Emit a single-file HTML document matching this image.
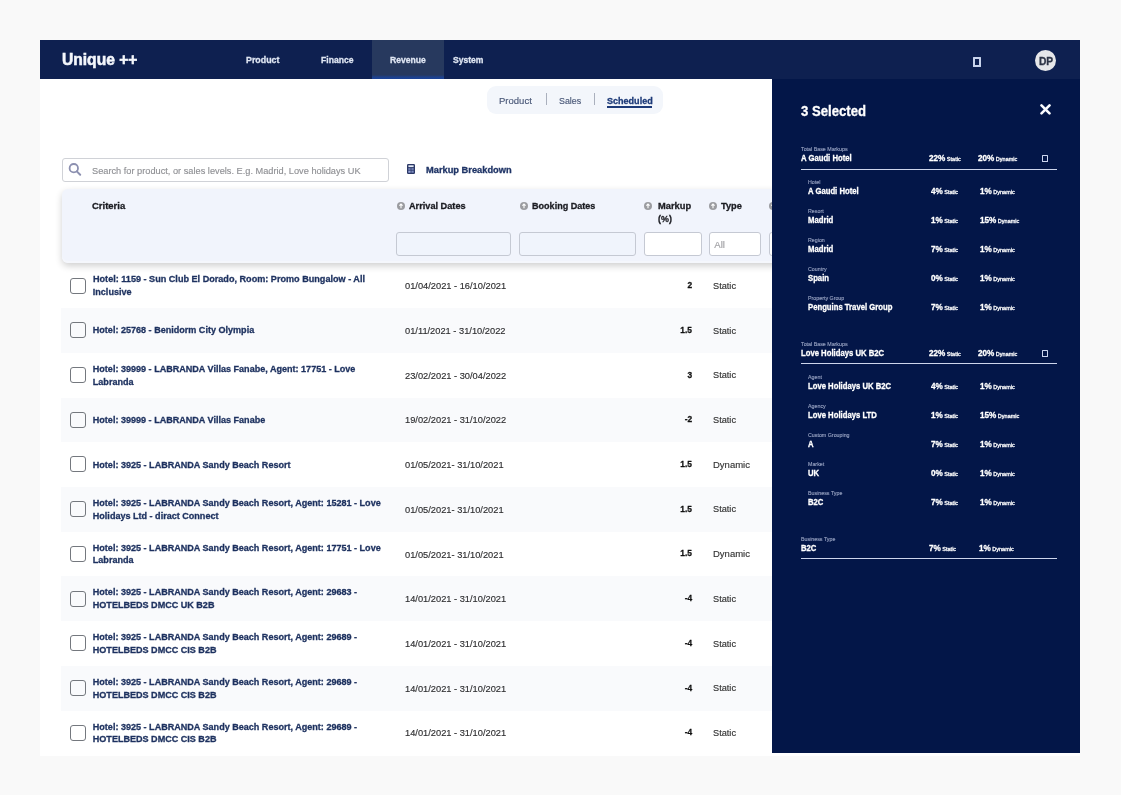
<!DOCTYPE html>
<html><head><meta charset="utf-8"><style>
html,body{margin:0;padding:0;}
body{width:1121px;height:795px;background:#f9f9f9;position:relative;overflow:hidden;font-family:"Liberation Sans", sans-serif;}
.t{position:absolute;white-space:nowrap;}
.b{position:absolute;box-sizing:border-box;}
</style></head><body><div style="position:absolute;left:0;top:0;width:1121px;height:795px;will-change:transform;">
<div class="b" style="left:40px;top:40px;width:1040px;height:715.5px;background:#fff;"></div>
<div class="b" style="left:40px;top:40px;width:1040px;height:39px;background:#0e2050;"></div>
<div class="b" style="left:372px;top:40px;width:72px;height:39px;background:#27395e;"></div>
<div class="b" style="left:372px;top:74.5px;width:72px;height:4.5px;background:linear-gradient(to bottom, rgba(27,66,150,0) 0%, rgba(27,66,150,0.85) 55%, #1b4296 100%);"></div>
<div class="t" style="left:62.10px;top:51.72px;font-size:15.6px;line-height:15.6px;font-weight:700;color:#f4f7fc;-webkit-text-stroke:0.3px #f4f7fc;transform:scaleX(1.0001);transform-origin:left center;-webkit-text-stroke:0.55px #f4f7fc;">Unique ++</div>
<div class="t" style="left:245.70px;top:55.02px;font-size:9.6px;line-height:9.6px;font-weight:700;color:#dfe6f3;-webkit-text-stroke:0.3px #dfe6f3;transform:scaleX(0.9214);transform-origin:left center;">Product</div>
<div class="t" style="left:320.80px;top:55.02px;font-size:9.6px;line-height:9.6px;font-weight:700;color:#dfe6f3;-webkit-text-stroke:0.3px #dfe6f3;transform:scaleX(0.8962);transform-origin:left center;">Finance</div>
<div class="t" style="left:390.20px;top:55.02px;font-size:9.6px;line-height:9.6px;font-weight:700;color:#dfe6f3;-webkit-text-stroke:0.3px #dfe6f3;transform:scaleX(0.8950);transform-origin:left center;">Revenue</div>
<div class="t" style="left:452.80px;top:55.02px;font-size:9.6px;line-height:9.6px;font-weight:700;color:#dfe6f3;-webkit-text-stroke:0.3px #dfe6f3;transform:scaleX(0.8934);transform-origin:left center;">System</div>
<div class="b" style="left:973px;top:57.3px;width:8.1px;height:9.6px;border:2px solid #c9d4ec;border-radius:0.5px;"></div>
<div class="b" style="left:1035px;top:50.2px;width:21.2px;height:21.2px;border-radius:50%;background:#e6e7ea;"></div>
<div class="t" style="left:1038.60px;top:57.00px;font-size:10.0px;line-height:10.0px;font-weight:700;color:#2d3446;-webkit-text-stroke:0.3px #2d3446;transform:scaleX(1.0211);transform-origin:left center;">DP</div>
<div class="b" style="left:487px;top:86px;width:176px;height:28px;background:#f3f6fb;border-radius:9px;"></div>
<div class="t" style="left:499.00px;top:95.88px;font-size:9.4px;line-height:9.4px;font-weight:400;color:#4a5878;-webkit-text-stroke:0.15px #4a5878;transform:scaleX(1.0151);transform-origin:left center;">Product</div>
<div class="b" style="left:545.8px;top:93.3px;width:1px;height:12.2px;background:#aab0bd;"></div>
<div class="t" style="left:558.70px;top:95.88px;font-size:9.4px;line-height:9.4px;font-weight:400;color:#4a5878;-webkit-text-stroke:0.15px #4a5878;transform:scaleX(0.9466);transform-origin:left center;">Sales</div>
<div class="b" style="left:593.6px;top:93.3px;width:1px;height:12.2px;background:#aab0bd;"></div>
<div class="t" style="left:606.80px;top:95.88px;font-size:9.4px;line-height:9.4px;font-weight:700;color:#1d3a78;-webkit-text-stroke:0.3px #1d3a78;transform:scaleX(0.9640);transform-origin:left center;">Scheduled</div>
<div class="b" style="left:606.8px;top:106.4px;width:45.7px;height:1.3px;background:#1d3a78;"></div>
<div class="b" style="left:62px;top:158px;width:327px;height:24px;border:1px solid #d0d2d7;border-radius:3px;background:#fff;"></div>
<svg class="b" style="left:66px;top:161px" width="18" height="18" viewBox="0 0 18 18"><circle cx="7.8" cy="7.2" r="4.2" fill="none" stroke="#8c90b0" stroke-width="1.8"/><line x1="10.8" y1="10.4" x2="14.2" y2="13.8" stroke="#8c90b0" stroke-width="2" stroke-linecap="round"/></svg>
<div class="t" style="left:92.10px;top:165.68px;font-size:9.9px;line-height:9.9px;font-weight:400;color:#8f9094;-webkit-text-stroke:0.15px #8f9094;transform:scaleX(0.9339);transform-origin:left center;">Search for product, or sales levels. E.g. Madrid, Love holidays UK</div>
<svg class="b" style="left:407px;top:163.8px" width="8" height="10" viewBox="0 0 8 10"><rect x="0" y="0" width="8" height="10" rx="1.2" fill="#2b3866"/><rect x="1.4" y="1.3" width="5.2" height="1.8" fill="#e3eaf7"/><rect x="1.3" y="4.2" width="2.3" height="1.6" fill="#7d8cc0"/><rect x="4.4" y="4.2" width="2.3" height="1.6" fill="#7d8cc0"/><rect x="1.3" y="6.6" width="2.3" height="2.1" fill="#9aa8dd"/><rect x="4.4" y="6.6" width="2.3" height="2.1" fill="#7d8cc0"/></svg>
<div class="t" style="left:425.70px;top:165.86px;font-size:9.3px;line-height:9.3px;font-weight:700;color:#1f3466;-webkit-text-stroke:0.3px #1f3466;transform:scaleX(0.9992);transform-origin:left center;">Markup Breakdown</div>
<div class="b" style="left:61.5px;top:189.3px;width:720px;height:73.5px;background:#f1f4fc;border-radius:6px;box-shadow:0 3px 7px rgba(0,0,0,0.19), inset 0 -2px 0 #f5f7fc;"></div>
<div class="t" style="left:92.00px;top:201.94px;font-size:9.2px;line-height:9.2px;font-weight:700;color:#1b1c22;-webkit-text-stroke:0.3px #1b1c22;transform:scaleX(1.0320);transform-origin:left center;">Criteria</div>
<svg class="b" style="left:396.7px;top:201.9px" width="8" height="8" viewBox="0 0 8 8"><circle cx="4" cy="4" r="4" fill="#9b9ca0"/><path d="M4 6.2V2.2M2.4 3.7L4 2 5.6 3.7" fill="none" stroke="#fff" stroke-width="1.1"/></svg>
<div class="t" style="left:408.60px;top:201.94px;font-size:9.2px;line-height:9.2px;font-weight:700;color:#1b1c22;-webkit-text-stroke:0.3px #1b1c22;transform:scaleX(0.9985);transform-origin:left center;">Arrival Dates</div>
<svg class="b" style="left:519.5px;top:201.9px" width="8" height="8" viewBox="0 0 8 8"><circle cx="4" cy="4" r="4" fill="#9b9ca0"/><path d="M4 6.2V2.2M2.4 3.7L4 2 5.6 3.7" fill="none" stroke="#fff" stroke-width="1.1"/></svg>
<div class="t" style="left:531.70px;top:201.94px;font-size:9.2px;line-height:9.2px;font-weight:700;color:#1b1c22;-webkit-text-stroke:0.3px #1b1c22;transform:scaleX(0.9856);transform-origin:left center;">Booking Dates</div>
<svg class="b" style="left:644.3px;top:201.9px" width="8" height="8" viewBox="0 0 8 8"><circle cx="4" cy="4" r="4" fill="#9b9ca0"/><path d="M4 6.2V2.2M2.4 3.7L4 2 5.6 3.7" fill="none" stroke="#fff" stroke-width="1.1"/></svg>
<div class="t" style="left:657.90px;top:201.94px;font-size:9.2px;line-height:9.2px;font-weight:700;color:#1b1c22;-webkit-text-stroke:0.3px #1b1c22;transform:scaleX(1.0126);transform-origin:left center;">Markup</div>
<div class="t" style="left:657.90px;top:214.94px;font-size:9.2px;line-height:9.2px;font-weight:700;color:#1b1c22;-webkit-text-stroke:0.3px #1b1c22;transform:scaleX(0.9700);transform-origin:left center;">(%)</div>
<svg class="b" style="left:709.2px;top:201.9px" width="8" height="8" viewBox="0 0 8 8"><circle cx="4" cy="4" r="4" fill="#9b9ca0"/><path d="M4 6.2V2.2M2.4 3.7L4 2 5.6 3.7" fill="none" stroke="#fff" stroke-width="1.1"/></svg>
<div class="t" style="left:721.00px;top:201.94px;font-size:9.2px;line-height:9.2px;font-weight:700;color:#1b1c22;-webkit-text-stroke:0.3px #1b1c22;transform:scaleX(1.0065);transform-origin:left center;">Type</div>
<svg class="b" style="left:768.5px;top:201.9px" width="8" height="8" viewBox="0 0 8 8"><circle cx="4" cy="4" r="4" fill="#9b9ca0"/><path d="M4 6.2V2.2M2.4 3.7L4 2 5.6 3.7" fill="none" stroke="#fff" stroke-width="1.1"/></svg>
<div class="b" style="left:396.4px;top:232.2px;width:115px;height:23.4px;border:1px solid #c5c9d3;border-radius:3px;background:#f0f4fc;"></div>
<div class="b" style="left:519.3px;top:232.2px;width:117px;height:23.4px;border:1px solid #c5c9d3;border-radius:3px;background:#f0f4fc;"></div>
<div class="b" style="left:644.3px;top:232.2px;width:57.4px;height:23.4px;border:1px solid #c5c9d3;border-radius:3px;background:#fff;"></div>
<div class="b" style="left:709.2px;top:232.2px;width:52.3px;height:23.4px;border:1px solid #c5c9d3;border-radius:3px;background:#fff;"></div>
<div class="b" style="left:768.6px;top:232.2px;width:20px;height:23.4px;border:1px solid #c5c9d3;border-radius:3px;background:#fff;"></div>
<div class="t" style="left:714.30px;top:240.12px;font-size:9.6px;line-height:9.6px;font-weight:400;color:#a0a0a4;-webkit-text-stroke:0.15px #a0a0a4;">All</div>
<div class="b" style="left:69.8px;top:277.65500000000003px;width:16px;height:16px;border:1.4px solid #74787e;border-radius:3px;"></div>
<div class="t" style="left:92.80px;top:275.42px;font-size:9.05px;line-height:9.05px;font-weight:700;color:#1d315f;-webkit-text-stroke:0.3px #1d315f;transform:scaleX(1.0052);transform-origin:left center;">Hotel: 1159 - Sun Club El Dorado, Room: Promo Bungalow - All</div>
<div class="t" style="left:92.80px;top:288.22px;font-size:9.05px;line-height:9.05px;font-weight:700;color:#1d315f;-webkit-text-stroke:0.3px #1d315f;">Inclusive</div>
<div class="t" style="left:404.80px;top:281.33px;font-size:9.9px;line-height:9.9px;font-weight:400;color:#2e2e30;-webkit-text-stroke:0.15px #2e2e30;transform:scaleX(0.9400);transform-origin:left center;">01/04/2021 - 16/10/2021</div>
<div class="t" style="right:428.80px;text-align:right;top:281.12px;font-size:9.3px;line-height:9.3px;font-weight:700;color:#111;-webkit-text-stroke:0.3px #111;transform:scaleX(0.9000);transform-origin:right center;">2</div>
<div class="t" style="left:713.00px;top:280.94px;font-size:9.9px;line-height:9.9px;font-weight:400;color:#333;-webkit-text-stroke:0.15px #333;transform:scaleX(0.9311);transform-origin:left center;">Static</div>
<div class="b" style="left:61px;top:308.21px;width:711px;height:44.71px;background:#f9fafc;"></div>
<div class="b" style="left:69.8px;top:322.365px;width:16px;height:16px;border:1.4px solid #74787e;border-radius:3px;"></div>
<div class="t" style="left:92.80px;top:326.43px;font-size:9.05px;line-height:9.05px;font-weight:700;color:#1d315f;-webkit-text-stroke:0.3px #1d315f;">Hotel: 25768 - Benidorm City Olympia</div>
<div class="t" style="left:404.80px;top:326.04px;font-size:9.9px;line-height:9.9px;font-weight:400;color:#2e2e30;-webkit-text-stroke:0.15px #2e2e30;transform:scaleX(0.9400);transform-origin:left center;">01/11/2021 - 31/10/2022</div>
<div class="t" style="right:428.80px;text-align:right;top:325.82px;font-size:9.3px;line-height:9.3px;font-weight:700;color:#111;-webkit-text-stroke:0.3px #111;transform:scaleX(0.9000);transform-origin:right center;">1.5</div>
<div class="t" style="left:713.00px;top:325.64px;font-size:9.9px;line-height:9.9px;font-weight:400;color:#333;-webkit-text-stroke:0.15px #333;transform:scaleX(0.9311);transform-origin:left center;">Static</div>
<div class="b" style="left:69.8px;top:367.07500000000005px;width:16px;height:16px;border:1.4px solid #74787e;border-radius:3px;"></div>
<div class="t" style="left:92.80px;top:364.84px;font-size:9.05px;line-height:9.05px;font-weight:700;color:#1d315f;-webkit-text-stroke:0.3px #1d315f;">Hotel: 39999 - LABRANDA Villas Fanabe, Agent: 17751 - Love</div>
<div class="t" style="left:92.80px;top:377.64px;font-size:9.05px;line-height:9.05px;font-weight:700;color:#1d315f;-webkit-text-stroke:0.3px #1d315f;">Labranda</div>
<div class="t" style="left:404.80px;top:370.75px;font-size:9.9px;line-height:9.9px;font-weight:400;color:#2e2e30;-webkit-text-stroke:0.15px #2e2e30;transform:scaleX(0.9400);transform-origin:left center;">23/02/2021 - 30/04/2022</div>
<div class="t" style="right:428.80px;text-align:right;top:370.54px;font-size:9.3px;line-height:9.3px;font-weight:700;color:#111;-webkit-text-stroke:0.3px #111;transform:scaleX(0.9000);transform-origin:right center;">3</div>
<div class="t" style="left:713.00px;top:370.36px;font-size:9.9px;line-height:9.9px;font-weight:400;color:#333;-webkit-text-stroke:0.15px #333;transform:scaleX(0.9311);transform-origin:left center;">Static</div>
<div class="b" style="left:61px;top:397.63px;width:711px;height:44.71px;background:#f9fafc;"></div>
<div class="b" style="left:69.8px;top:411.785px;width:16px;height:16px;border:1.4px solid #74787e;border-radius:3px;"></div>
<div class="t" style="left:92.80px;top:415.85px;font-size:9.05px;line-height:9.05px;font-weight:700;color:#1d315f;-webkit-text-stroke:0.3px #1d315f;">Hotel: 39999 - LABRANDA Villas Fanabe</div>
<div class="t" style="left:404.80px;top:415.46px;font-size:9.9px;line-height:9.9px;font-weight:400;color:#2e2e30;-webkit-text-stroke:0.15px #2e2e30;transform:scaleX(0.9400);transform-origin:left center;">19/02/2021 - 31/10/2022</div>
<div class="t" style="right:428.80px;text-align:right;top:415.25px;font-size:9.3px;line-height:9.3px;font-weight:700;color:#111;-webkit-text-stroke:0.3px #111;transform:scaleX(0.9000);transform-origin:right center;">-2</div>
<div class="t" style="left:713.00px;top:415.06px;font-size:9.9px;line-height:9.9px;font-weight:400;color:#333;-webkit-text-stroke:0.15px #333;transform:scaleX(0.9311);transform-origin:left center;">Static</div>
<div class="b" style="left:69.8px;top:456.49500000000006px;width:16px;height:16px;border:1.4px solid #74787e;border-radius:3px;"></div>
<div class="t" style="left:92.80px;top:460.56px;font-size:9.05px;line-height:9.05px;font-weight:700;color:#1d315f;-webkit-text-stroke:0.3px #1d315f;">Hotel: 3925 - LABRANDA Sandy Beach Resort</div>
<div class="t" style="left:404.80px;top:460.18px;font-size:9.9px;line-height:9.9px;font-weight:400;color:#2e2e30;-webkit-text-stroke:0.15px #2e2e30;transform:scaleX(0.9400);transform-origin:left center;">01/05/2021- 31/10/2021</div>
<div class="t" style="right:428.80px;text-align:right;top:459.96px;font-size:9.3px;line-height:9.3px;font-weight:700;color:#111;-webkit-text-stroke:0.3px #111;transform:scaleX(0.9000);transform-origin:right center;">1.5</div>
<div class="t" style="left:713.00px;top:459.78px;font-size:9.9px;line-height:9.9px;font-weight:400;color:#333;-webkit-text-stroke:0.15px #333;transform:scaleX(0.9630);transform-origin:left center;">Dynamic</div>
<div class="b" style="left:61px;top:487.05px;width:711px;height:44.71px;background:#f9fafc;"></div>
<div class="b" style="left:69.8px;top:501.20500000000004px;width:16px;height:16px;border:1.4px solid #74787e;border-radius:3px;"></div>
<div class="t" style="left:92.80px;top:498.97px;font-size:9.05px;line-height:9.05px;font-weight:700;color:#1d315f;-webkit-text-stroke:0.3px #1d315f;">Hotel: 3925 - LABRANDA Sandy Beach Resort, Agent: 15281 - Love</div>
<div class="t" style="left:92.80px;top:511.76px;font-size:9.05px;line-height:9.05px;font-weight:700;color:#1d315f;-webkit-text-stroke:0.3px #1d315f;">Holidays Ltd - diract Connect</div>
<div class="t" style="left:404.80px;top:504.89px;font-size:9.9px;line-height:9.9px;font-weight:400;color:#2e2e30;-webkit-text-stroke:0.15px #2e2e30;transform:scaleX(0.9400);transform-origin:left center;">01/05/2021- 31/10/2021</div>
<div class="t" style="right:428.80px;text-align:right;top:504.67px;font-size:9.3px;line-height:9.3px;font-weight:700;color:#111;-webkit-text-stroke:0.3px #111;transform:scaleX(0.9000);transform-origin:right center;">1.5</div>
<div class="t" style="left:713.00px;top:504.48px;font-size:9.9px;line-height:9.9px;font-weight:400;color:#333;-webkit-text-stroke:0.15px #333;transform:scaleX(0.9311);transform-origin:left center;">Static</div>
<div class="b" style="left:69.8px;top:545.915px;width:16px;height:16px;border:1.4px solid #74787e;border-radius:3px;"></div>
<div class="t" style="left:92.80px;top:543.67px;font-size:9.05px;line-height:9.05px;font-weight:700;color:#1d315f;-webkit-text-stroke:0.3px #1d315f;">Hotel: 3925 - LABRANDA Sandy Beach Resort, Agent: 17751 - Love</div>
<div class="t" style="left:92.80px;top:556.47px;font-size:9.05px;line-height:9.05px;font-weight:700;color:#1d315f;-webkit-text-stroke:0.3px #1d315f;">Labranda</div>
<div class="t" style="left:404.80px;top:549.60px;font-size:9.9px;line-height:9.9px;font-weight:400;color:#2e2e30;-webkit-text-stroke:0.15px #2e2e30;transform:scaleX(0.9400);transform-origin:left center;">01/05/2021- 31/10/2021</div>
<div class="t" style="right:428.80px;text-align:right;top:549.38px;font-size:9.3px;line-height:9.3px;font-weight:700;color:#111;-webkit-text-stroke:0.3px #111;transform:scaleX(0.9000);transform-origin:right center;">1.5</div>
<div class="t" style="left:713.00px;top:549.20px;font-size:9.9px;line-height:9.9px;font-weight:400;color:#333;-webkit-text-stroke:0.15px #333;transform:scaleX(0.9630);transform-origin:left center;">Dynamic</div>
<div class="b" style="left:61px;top:576.47px;width:711px;height:44.71px;background:#f9fafc;"></div>
<div class="b" style="left:69.8px;top:590.625px;width:16px;height:16px;border:1.4px solid #74787e;border-radius:3px;"></div>
<div class="t" style="left:92.80px;top:588.38px;font-size:9.05px;line-height:9.05px;font-weight:700;color:#1d315f;-webkit-text-stroke:0.3px #1d315f;">Hotel: 3925 - LABRANDA Sandy Beach Resort, Agent: 29683 -</div>
<div class="t" style="left:92.80px;top:601.18px;font-size:9.05px;line-height:9.05px;font-weight:700;color:#1d315f;-webkit-text-stroke:0.3px #1d315f;">HOTELBEDS DMCC UK B2B</div>
<div class="t" style="left:404.80px;top:594.31px;font-size:9.9px;line-height:9.9px;font-weight:400;color:#2e2e30;-webkit-text-stroke:0.15px #2e2e30;transform:scaleX(0.9400);transform-origin:left center;">14/01/2021 - 31/10/2021</div>
<div class="t" style="right:428.80px;text-align:right;top:594.09px;font-size:9.3px;line-height:9.3px;font-weight:700;color:#111;-webkit-text-stroke:0.3px #111;transform:scaleX(0.9000);transform-origin:right center;">-4</div>
<div class="t" style="left:713.00px;top:593.91px;font-size:9.9px;line-height:9.9px;font-weight:400;color:#333;-webkit-text-stroke:0.15px #333;transform:scaleX(0.9311);transform-origin:left center;">Static</div>
<div class="b" style="left:69.8px;top:635.335px;width:16px;height:16px;border:1.4px solid #74787e;border-radius:3px;"></div>
<div class="t" style="left:92.80px;top:633.10px;font-size:9.05px;line-height:9.05px;font-weight:700;color:#1d315f;-webkit-text-stroke:0.3px #1d315f;">Hotel: 3925 - LABRANDA Sandy Beach Resort, Agent: 29689 -</div>
<div class="t" style="left:92.80px;top:645.89px;font-size:9.05px;line-height:9.05px;font-weight:700;color:#1d315f;-webkit-text-stroke:0.3px #1d315f;">HOTELBEDS DMCC CIS B2B</div>
<div class="t" style="left:404.80px;top:639.02px;font-size:9.9px;line-height:9.9px;font-weight:400;color:#2e2e30;-webkit-text-stroke:0.15px #2e2e30;transform:scaleX(0.9400);transform-origin:left center;">14/01/2021 - 31/10/2021</div>
<div class="t" style="right:428.80px;text-align:right;top:638.80px;font-size:9.3px;line-height:9.3px;font-weight:700;color:#111;-webkit-text-stroke:0.3px #111;transform:scaleX(0.9000);transform-origin:right center;">-4</div>
<div class="t" style="left:713.00px;top:638.62px;font-size:9.9px;line-height:9.9px;font-weight:400;color:#333;-webkit-text-stroke:0.15px #333;transform:scaleX(0.9311);transform-origin:left center;">Static</div>
<div class="b" style="left:61px;top:665.89px;width:711px;height:44.71px;background:#f9fafc;"></div>
<div class="b" style="left:69.8px;top:680.045px;width:16px;height:16px;border:1.4px solid #74787e;border-radius:3px;"></div>
<div class="t" style="left:92.80px;top:677.80px;font-size:9.05px;line-height:9.05px;font-weight:700;color:#1d315f;-webkit-text-stroke:0.3px #1d315f;">Hotel: 3925 - LABRANDA Sandy Beach Resort, Agent: 29689 -</div>
<div class="t" style="left:92.80px;top:690.60px;font-size:9.05px;line-height:9.05px;font-weight:700;color:#1d315f;-webkit-text-stroke:0.3px #1d315f;">HOTELBEDS DMCC CIS B2B</div>
<div class="t" style="left:404.80px;top:683.73px;font-size:9.9px;line-height:9.9px;font-weight:400;color:#2e2e30;-webkit-text-stroke:0.15px #2e2e30;transform:scaleX(0.9400);transform-origin:left center;">14/01/2021 - 31/10/2021</div>
<div class="t" style="right:428.80px;text-align:right;top:683.50px;font-size:9.3px;line-height:9.3px;font-weight:700;color:#111;-webkit-text-stroke:0.3px #111;transform:scaleX(0.9000);transform-origin:right center;">-4</div>
<div class="t" style="left:713.00px;top:683.33px;font-size:9.9px;line-height:9.9px;font-weight:400;color:#333;-webkit-text-stroke:0.15px #333;transform:scaleX(0.9311);transform-origin:left center;">Static</div>
<div class="b" style="left:69.8px;top:724.755px;width:16px;height:16px;border:1.4px solid #74787e;border-radius:3px;"></div>
<div class="t" style="left:92.80px;top:722.51px;font-size:9.05px;line-height:9.05px;font-weight:700;color:#1d315f;-webkit-text-stroke:0.3px #1d315f;">Hotel: 3925 - LABRANDA Sandy Beach Resort, Agent: 29689 -</div>
<div class="t" style="left:92.80px;top:735.31px;font-size:9.05px;line-height:9.05px;font-weight:700;color:#1d315f;-webkit-text-stroke:0.3px #1d315f;">HOTELBEDS DMCC CIS B2B</div>
<div class="t" style="left:404.80px;top:728.44px;font-size:9.9px;line-height:9.9px;font-weight:400;color:#2e2e30;-webkit-text-stroke:0.15px #2e2e30;transform:scaleX(0.9400);transform-origin:left center;">14/01/2021 - 31/10/2021</div>
<div class="t" style="right:428.80px;text-align:right;top:728.22px;font-size:9.3px;line-height:9.3px;font-weight:700;color:#111;-webkit-text-stroke:0.3px #111;transform:scaleX(0.9000);transform-origin:right center;">-4</div>
<div class="t" style="left:713.00px;top:728.04px;font-size:9.9px;line-height:9.9px;font-weight:400;color:#333;-webkit-text-stroke:0.15px #333;transform:scaleX(0.9311);transform-origin:left center;">Static</div>
<div class="b" style="left:772px;top:79px;width:308px;height:674px;background:#031648;"></div>
<div class="t" style="left:801.00px;top:103.78px;font-size:14.4px;line-height:14.4px;font-weight:700;color:#ffffff;-webkit-text-stroke:0.3px #ffffff;transform:scaleX(0.9129);transform-origin:left center;">3 Selected</div>
<svg class="b" style="left:1040px;top:104px" width="11" height="11" viewBox="0 0 11 11"><path d="M1.5 1.4L9.5 9.3M9.5 1.4L1.5 9.3" stroke="#fbfcff" stroke-width="2.6" stroke-linecap="round"/></svg>
<div class="t" style="left:801.00px;top:146.88px;font-size:5.9px;line-height:5.9px;font-weight:400;color:#96a1c0;-webkit-text-stroke:0.15px #96a1c0;transform:scaleX(0.9000);transform-origin:left center;">Total Base Markups</div>
<div class="t" style="left:801.00px;top:154.18px;font-size:8.4px;line-height:8.4px;font-weight:700;color:#ffffff;-webkit-text-stroke:0.3px #ffffff;transform:scaleX(0.9200);transform-origin:left center;">A Gaudi Hotel</div>
<div class="t" style="left:928.50px;top:154.02px;font-size:8.6px;line-height:8.6px;font-weight:700;color:#ffffff;-webkit-text-stroke:0.3px #ffffff;transform:scaleX(0.9500);transform-origin:left center;">22%<span style="font-size:5.8px;font-weight:400"> Static</span></div>
<div class="t" style="left:978.00px;top:154.02px;font-size:8.6px;line-height:8.6px;font-weight:700;color:#ffffff;-webkit-text-stroke:0.3px #ffffff;transform:scaleX(0.9500);transform-origin:left center;">20%<span style="font-size:5.8px;font-weight:400"> Dynamic</span></div>
<div class="b" style="left:1042.4px;top:154.8px;width:5.7px;height:7.2px;border:1.6px solid #ccd5ef;border-radius:0.6px;"></div>
<div class="b" style="left:801px;top:168.6px;width:256px;height:1.3px;background:#cdd5ec;"></div>
<div class="t" style="left:808.20px;top:179.78px;font-size:5.9px;line-height:5.9px;font-weight:400;color:#96a1c0;-webkit-text-stroke:0.15px #96a1c0;transform:scaleX(0.9000);transform-origin:left center;">Hotel</div>
<div class="t" style="left:808.20px;top:187.08px;font-size:8.4px;line-height:8.4px;font-weight:700;color:#ffffff;-webkit-text-stroke:0.3px #ffffff;transform:scaleX(0.9200);transform-origin:left center;">A Gaudi Hotel</div>
<div class="t" style="left:930.70px;top:186.92px;font-size:8.6px;line-height:8.6px;font-weight:700;color:#ffffff;-webkit-text-stroke:0.3px #ffffff;transform:scaleX(0.9500);transform-origin:left center;">4%<span style="font-size:5.8px;font-weight:400"> Static</span></div>
<div class="t" style="left:979.90px;top:186.92px;font-size:8.6px;line-height:8.6px;font-weight:700;color:#ffffff;-webkit-text-stroke:0.3px #ffffff;transform:scaleX(0.9500);transform-origin:left center;">1%<span style="font-size:5.8px;font-weight:400"> Dynamic</span></div>
<div class="t" style="left:808.20px;top:208.78px;font-size:5.9px;line-height:5.9px;font-weight:400;color:#96a1c0;-webkit-text-stroke:0.15px #96a1c0;transform:scaleX(0.9000);transform-origin:left center;">Resort</div>
<div class="t" style="left:808.20px;top:216.08px;font-size:8.4px;line-height:8.4px;font-weight:700;color:#ffffff;-webkit-text-stroke:0.3px #ffffff;transform:scaleX(0.9200);transform-origin:left center;">Madrid</div>
<div class="t" style="left:930.70px;top:215.92px;font-size:8.6px;line-height:8.6px;font-weight:700;color:#ffffff;-webkit-text-stroke:0.3px #ffffff;transform:scaleX(0.9500);transform-origin:left center;">1%<span style="font-size:5.8px;font-weight:400"> Static</span></div>
<div class="t" style="left:979.90px;top:215.92px;font-size:8.6px;line-height:8.6px;font-weight:700;color:#ffffff;-webkit-text-stroke:0.3px #ffffff;transform:scaleX(0.9500);transform-origin:left center;">15%<span style="font-size:5.8px;font-weight:400"> Dynamic</span></div>
<div class="t" style="left:808.20px;top:237.78px;font-size:5.9px;line-height:5.9px;font-weight:400;color:#96a1c0;-webkit-text-stroke:0.15px #96a1c0;transform:scaleX(0.9000);transform-origin:left center;">Region</div>
<div class="t" style="left:808.20px;top:245.08px;font-size:8.4px;line-height:8.4px;font-weight:700;color:#ffffff;-webkit-text-stroke:0.3px #ffffff;transform:scaleX(0.9200);transform-origin:left center;">Madrid</div>
<div class="t" style="left:930.70px;top:244.92px;font-size:8.6px;line-height:8.6px;font-weight:700;color:#ffffff;-webkit-text-stroke:0.3px #ffffff;transform:scaleX(0.9500);transform-origin:left center;">7%<span style="font-size:5.8px;font-weight:400"> Static</span></div>
<div class="t" style="left:979.90px;top:244.92px;font-size:8.6px;line-height:8.6px;font-weight:700;color:#ffffff;-webkit-text-stroke:0.3px #ffffff;transform:scaleX(0.9500);transform-origin:left center;">1%<span style="font-size:5.8px;font-weight:400"> Dynamic</span></div>
<div class="t" style="left:808.20px;top:266.78px;font-size:5.9px;line-height:5.9px;font-weight:400;color:#96a1c0;-webkit-text-stroke:0.15px #96a1c0;transform:scaleX(0.9000);transform-origin:left center;">Country</div>
<div class="t" style="left:808.20px;top:274.08px;font-size:8.4px;line-height:8.4px;font-weight:700;color:#ffffff;-webkit-text-stroke:0.3px #ffffff;transform:scaleX(0.9200);transform-origin:left center;">Spain</div>
<div class="t" style="left:930.70px;top:273.92px;font-size:8.6px;line-height:8.6px;font-weight:700;color:#ffffff;-webkit-text-stroke:0.3px #ffffff;transform:scaleX(0.9500);transform-origin:left center;">0%<span style="font-size:5.8px;font-weight:400"> Static</span></div>
<div class="t" style="left:979.90px;top:273.92px;font-size:8.6px;line-height:8.6px;font-weight:700;color:#ffffff;-webkit-text-stroke:0.3px #ffffff;transform:scaleX(0.9500);transform-origin:left center;">1%<span style="font-size:5.8px;font-weight:400"> Dynamic</span></div>
<div class="t" style="left:808.20px;top:295.78px;font-size:5.9px;line-height:5.9px;font-weight:400;color:#96a1c0;-webkit-text-stroke:0.15px #96a1c0;transform:scaleX(0.9000);transform-origin:left center;">Property Group</div>
<div class="t" style="left:808.20px;top:303.08px;font-size:8.4px;line-height:8.4px;font-weight:700;color:#ffffff;-webkit-text-stroke:0.3px #ffffff;transform:scaleX(0.9200);transform-origin:left center;">Penguins Travel Group</div>
<div class="t" style="left:930.70px;top:302.92px;font-size:8.6px;line-height:8.6px;font-weight:700;color:#ffffff;-webkit-text-stroke:0.3px #ffffff;transform:scaleX(0.9500);transform-origin:left center;">7%<span style="font-size:5.8px;font-weight:400"> Static</span></div>
<div class="t" style="left:979.90px;top:302.92px;font-size:8.6px;line-height:8.6px;font-weight:700;color:#ffffff;-webkit-text-stroke:0.3px #ffffff;transform:scaleX(0.9500);transform-origin:left center;">1%<span style="font-size:5.8px;font-weight:400"> Dynamic</span></div>
<div class="t" style="left:801.00px;top:341.68px;font-size:5.9px;line-height:5.9px;font-weight:400;color:#96a1c0;-webkit-text-stroke:0.15px #96a1c0;transform:scaleX(0.9000);transform-origin:left center;">Total Base Markups</div>
<div class="t" style="left:801.00px;top:348.98px;font-size:8.4px;line-height:8.4px;font-weight:700;color:#ffffff;-webkit-text-stroke:0.3px #ffffff;transform:scaleX(0.9200);transform-origin:left center;">Love Holidays UK B2C</div>
<div class="t" style="left:928.50px;top:348.82px;font-size:8.6px;line-height:8.6px;font-weight:700;color:#ffffff;-webkit-text-stroke:0.3px #ffffff;transform:scaleX(0.9500);transform-origin:left center;">22%<span style="font-size:5.8px;font-weight:400"> Static</span></div>
<div class="t" style="left:978.00px;top:348.82px;font-size:8.6px;line-height:8.6px;font-weight:700;color:#ffffff;-webkit-text-stroke:0.3px #ffffff;transform:scaleX(0.9500);transform-origin:left center;">20%<span style="font-size:5.8px;font-weight:400"> Dynamic</span></div>
<div class="b" style="left:1042.4px;top:349.59999999999997px;width:5.7px;height:7.2px;border:1.6px solid #ccd5ef;border-radius:0.6px;"></div>
<div class="b" style="left:801px;top:363.2px;width:256px;height:1.3px;background:#cdd5ec;"></div>
<div class="t" style="left:808.20px;top:374.58px;font-size:5.9px;line-height:5.9px;font-weight:400;color:#96a1c0;-webkit-text-stroke:0.15px #96a1c0;transform:scaleX(0.9000);transform-origin:left center;">Agent</div>
<div class="t" style="left:808.20px;top:381.88px;font-size:8.4px;line-height:8.4px;font-weight:700;color:#ffffff;-webkit-text-stroke:0.3px #ffffff;transform:scaleX(0.9200);transform-origin:left center;">Love Holidays UK B2C</div>
<div class="t" style="left:930.70px;top:381.72px;font-size:8.6px;line-height:8.6px;font-weight:700;color:#ffffff;-webkit-text-stroke:0.3px #ffffff;transform:scaleX(0.9500);transform-origin:left center;">4%<span style="font-size:5.8px;font-weight:400"> Static</span></div>
<div class="t" style="left:979.90px;top:381.72px;font-size:8.6px;line-height:8.6px;font-weight:700;color:#ffffff;-webkit-text-stroke:0.3px #ffffff;transform:scaleX(0.9500);transform-origin:left center;">1%<span style="font-size:5.8px;font-weight:400"> Dynamic</span></div>
<div class="t" style="left:808.20px;top:403.58px;font-size:5.9px;line-height:5.9px;font-weight:400;color:#96a1c0;-webkit-text-stroke:0.15px #96a1c0;transform:scaleX(0.9000);transform-origin:left center;">Agency</div>
<div class="t" style="left:808.20px;top:410.88px;font-size:8.4px;line-height:8.4px;font-weight:700;color:#ffffff;-webkit-text-stroke:0.3px #ffffff;transform:scaleX(0.9200);transform-origin:left center;">Love Holidays LTD</div>
<div class="t" style="left:930.70px;top:410.72px;font-size:8.6px;line-height:8.6px;font-weight:700;color:#ffffff;-webkit-text-stroke:0.3px #ffffff;transform:scaleX(0.9500);transform-origin:left center;">1%<span style="font-size:5.8px;font-weight:400"> Static</span></div>
<div class="t" style="left:979.90px;top:410.72px;font-size:8.6px;line-height:8.6px;font-weight:700;color:#ffffff;-webkit-text-stroke:0.3px #ffffff;transform:scaleX(0.9500);transform-origin:left center;">15%<span style="font-size:5.8px;font-weight:400"> Dynamic</span></div>
<div class="t" style="left:808.20px;top:432.58px;font-size:5.9px;line-height:5.9px;font-weight:400;color:#96a1c0;-webkit-text-stroke:0.15px #96a1c0;transform:scaleX(0.9000);transform-origin:left center;">Custom Grouping</div>
<div class="t" style="left:808.20px;top:439.88px;font-size:8.4px;line-height:8.4px;font-weight:700;color:#ffffff;-webkit-text-stroke:0.3px #ffffff;transform:scaleX(0.9200);transform-origin:left center;">A</div>
<div class="t" style="left:930.70px;top:439.72px;font-size:8.6px;line-height:8.6px;font-weight:700;color:#ffffff;-webkit-text-stroke:0.3px #ffffff;transform:scaleX(0.9500);transform-origin:left center;">7%<span style="font-size:5.8px;font-weight:400"> Static</span></div>
<div class="t" style="left:979.90px;top:439.72px;font-size:8.6px;line-height:8.6px;font-weight:700;color:#ffffff;-webkit-text-stroke:0.3px #ffffff;transform:scaleX(0.9500);transform-origin:left center;">1%<span style="font-size:5.8px;font-weight:400"> Dynamic</span></div>
<div class="t" style="left:808.20px;top:461.58px;font-size:5.9px;line-height:5.9px;font-weight:400;color:#96a1c0;-webkit-text-stroke:0.15px #96a1c0;transform:scaleX(0.9000);transform-origin:left center;">Market</div>
<div class="t" style="left:808.20px;top:468.88px;font-size:8.4px;line-height:8.4px;font-weight:700;color:#ffffff;-webkit-text-stroke:0.3px #ffffff;transform:scaleX(0.9200);transform-origin:left center;">UK</div>
<div class="t" style="left:930.70px;top:468.72px;font-size:8.6px;line-height:8.6px;font-weight:700;color:#ffffff;-webkit-text-stroke:0.3px #ffffff;transform:scaleX(0.9500);transform-origin:left center;">0%<span style="font-size:5.8px;font-weight:400"> Static</span></div>
<div class="t" style="left:979.90px;top:468.72px;font-size:8.6px;line-height:8.6px;font-weight:700;color:#ffffff;-webkit-text-stroke:0.3px #ffffff;transform:scaleX(0.9500);transform-origin:left center;">1%<span style="font-size:5.8px;font-weight:400"> Dynamic</span></div>
<div class="t" style="left:808.20px;top:490.58px;font-size:5.9px;line-height:5.9px;font-weight:400;color:#96a1c0;-webkit-text-stroke:0.15px #96a1c0;transform:scaleX(0.9000);transform-origin:left center;">Business Type</div>
<div class="t" style="left:808.20px;top:497.88px;font-size:8.4px;line-height:8.4px;font-weight:700;color:#ffffff;-webkit-text-stroke:0.3px #ffffff;transform:scaleX(0.9200);transform-origin:left center;">B2C</div>
<div class="t" style="left:930.70px;top:497.72px;font-size:8.6px;line-height:8.6px;font-weight:700;color:#ffffff;-webkit-text-stroke:0.3px #ffffff;transform:scaleX(0.9500);transform-origin:left center;">7%<span style="font-size:5.8px;font-weight:400"> Static</span></div>
<div class="t" style="left:979.90px;top:497.72px;font-size:8.6px;line-height:8.6px;font-weight:700;color:#ffffff;-webkit-text-stroke:0.3px #ffffff;transform:scaleX(0.9500);transform-origin:left center;">1%<span style="font-size:5.8px;font-weight:400"> Dynamic</span></div>
<div class="t" style="left:801.00px;top:537.08px;font-size:5.9px;line-height:5.9px;font-weight:400;color:#96a1c0;-webkit-text-stroke:0.15px #96a1c0;transform:scaleX(0.9000);transform-origin:left center;">Business Type</div>
<div class="t" style="left:801.00px;top:544.38px;font-size:8.4px;line-height:8.4px;font-weight:700;color:#ffffff;-webkit-text-stroke:0.3px #ffffff;transform:scaleX(0.9200);transform-origin:left center;">B2C</div>
<div class="t" style="left:929.00px;top:544.22px;font-size:8.6px;line-height:8.6px;font-weight:700;color:#ffffff;-webkit-text-stroke:0.3px #ffffff;transform:scaleX(0.9500);transform-origin:left center;">7%<span style="font-size:5.8px;font-weight:400"> Static</span></div>
<div class="t" style="left:978.60px;top:544.22px;font-size:8.6px;line-height:8.6px;font-weight:700;color:#ffffff;-webkit-text-stroke:0.3px #ffffff;transform:scaleX(0.9500);transform-origin:left center;">1%<span style="font-size:5.8px;font-weight:400"> Dynamic</span></div>
<div class="b" style="left:801px;top:558.1px;width:256px;height:1.3px;background:#cdd5ec;"></div>
</div></body></html>
